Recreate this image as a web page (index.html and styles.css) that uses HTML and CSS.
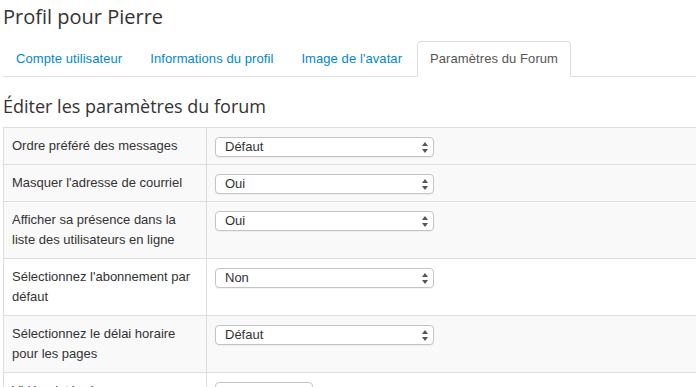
FILE: index.html
```html
<!DOCTYPE html>
<html lang="fr">

<head>
    <meta charset="UTF-8">
    <meta name="viewport" content="width=device-width, initial-scale=1.0">
    <title>Profil pour Pierre</title>
    <link rel="stylesheet" href="styles.css">
</head>

<body>
    <div class="page">
        <h1>Profil pour Pierre</h1>

        <ul class="nav-tabs">
            <li><a href="#">Compte utilisateur</a></li>
            <li><a href="#">Informations du profil</a></li>
            <li><a href="#">Image de l'avatar</a></li>
            <li class="active"><a href="#">Paramètres du Forum</a></li>
        </ul>

        <h2>Éditer les paramètres du forum</h2>

        <table class="settings">
            <tr class="odd">
                <td class="label">Ordre préféré des messages</td>
                <td>
                    <div class="select-wrap">
                        <select><option>Défaut</option></select>
                        <svg class="arrows" width="6" height="11" viewBox="0 0 6 11"><path d="M3 0 L6 4 L0 4 Z M0 7 L6 7 L3 11 Z" fill="#555"/></svg>
                    </div>
                </td>
            </tr>
            <tr class="odd">
                <td class="label">Masquer l'adresse de courriel</td>
                <td>
                    <div class="select-wrap">
                        <select><option>Oui</option></select>
                        <svg class="arrows" width="6" height="11" viewBox="0 0 6 11"><path d="M3 0 L6 4 L0 4 Z M0 7 L6 7 L3 11 Z" fill="#555"/></svg>
                    </div>
                </td>
            </tr>
            <tr class="odd">
                <td class="label">Afficher sa présence dans la liste des utilisateurs en ligne</td>
                <td>
                    <div class="select-wrap">
                        <select><option>Oui</option></select>
                        <svg class="arrows" width="6" height="11" viewBox="0 0 6 11"><path d="M3 0 L6 4 L0 4 Z M0 7 L6 7 L3 11 Z" fill="#555"/></svg>
                    </div>
                </td>
            </tr>
            <tr>
                <td class="label">Sélectionnez l'abonnement par défaut</td>
                <td>
                    <div class="select-wrap">
                        <select><option>Non</option></select>
                        <svg class="arrows" width="6" height="11" viewBox="0 0 6 11"><path d="M3 0 L6 4 L0 4 Z M0 7 L6 7 L3 11 Z" fill="#555"/></svg>
                    </div>
                </td>
            </tr>
            <tr class="odd">
                <td class="label">Sélectionnez le délai horaire pour les pages</td>
                <td>
                    <div class="select-wrap">
                        <select><option>Défaut</option></select>
                        <svg class="arrows" width="6" height="11" viewBox="0 0 6 11"><path d="M3 0 L6 4 L0 4 Z M0 7 L6 7 L3 11 Z" fill="#555"/></svg>
                    </div>
                </td>
            </tr>
            <tr>
                <td class="label">Vidéos intégrées</td>
                <td>
                    <div class="select-wrap small">
                        <select><option>Oui</option></select>
                        <svg class="arrows" width="6" height="11" viewBox="0 0 6 11"><path d="M3 0 L6 4 L0 4 Z M0 7 L6 7 L3 11 Z" fill="#555"/></svg>
                    </div>
                </td>
            </tr>
        </table>
    </div>
</body>

</html>
```

FILE: styles.css
```css
html,
body {
    margin: 0;
    padding: 0;
    overflow: hidden;
    background-color: #fff;
}

body {
    font-family: "Liberation Sans", Arial, sans-serif;
    font-size: 13px;
    line-height: 20px;
    color: #333;
}

.page {
    width: 760px;
    padding: 0 0 0 3px;
}

h1 {
    font-family: "Open Sans", sans-serif;
    font-weight: 400;
    font-size: 20px;
    line-height: 34px;
    margin: 0 0 7px;
    color: #333;
}

h2 {
    font-family: "Open Sans", sans-serif;
    font-weight: 400;
    font-size: 18px;
    line-height: 24px;
    margin: 17px 0 9px;
    color: #333;
}

.nav-tabs {
    display: flex;
    list-style: none;
    margin: 0;
    padding: 0;
    border-bottom: 1px solid #ddd;
}

.nav-tabs li {
    margin-right: 2px;
    margin-bottom: -1px;
}

.nav-tabs a {
    display: block;
    padding: 7px 12px;
    line-height: 20px;
    letter-spacing: 0.08px;
    border: 1px solid transparent;
    border-radius: 4px 4px 0 0;
    color: #0088cc;
    text-decoration: none;
}

.nav-tabs .active a {
    color: #555;
    background-color: #fff;
    border-color: #ddd #ddd transparent;
}

.settings {
    width: 100%;
    border-collapse: collapse;
    border-left: 1px solid #ddd;
    border-top: 1px solid #ddd;
}

.settings td {
    padding: 8px;
    vertical-align: top;
    border-bottom: 1px solid #ddd;
}

.settings td.label {
    width: 186px;
    border-right: 1px solid #ddd;
}

.settings tr.odd td {
    background-color: #f9f9f9;
}

.select-wrap {
    position: relative;
    width: 219px;
    height: 20px;
    margin: 1px 0 -1px;
}

.select-wrap.small {
    width: 98px;
}

.select-wrap select {
    appearance: none;
    -webkit-appearance: none;
    width: 100%;
    height: 20px;
    margin: 0;
    padding: 0 0 0 9px;
    border: 1px solid #c4c4c4;
    border-radius: 4px;
    background-color: #fff;
    box-shadow: 0 1px 1px rgba(0, 0, 0, 0.05);
    font-family: "Liberation Sans", Arial, sans-serif;
    font-size: 13px;
    line-height: 18px;
    color: #333;
}

.arrows {
    position: absolute;
    right: 6px;
    top: 5px;
    pointer-events: none;
}
```
